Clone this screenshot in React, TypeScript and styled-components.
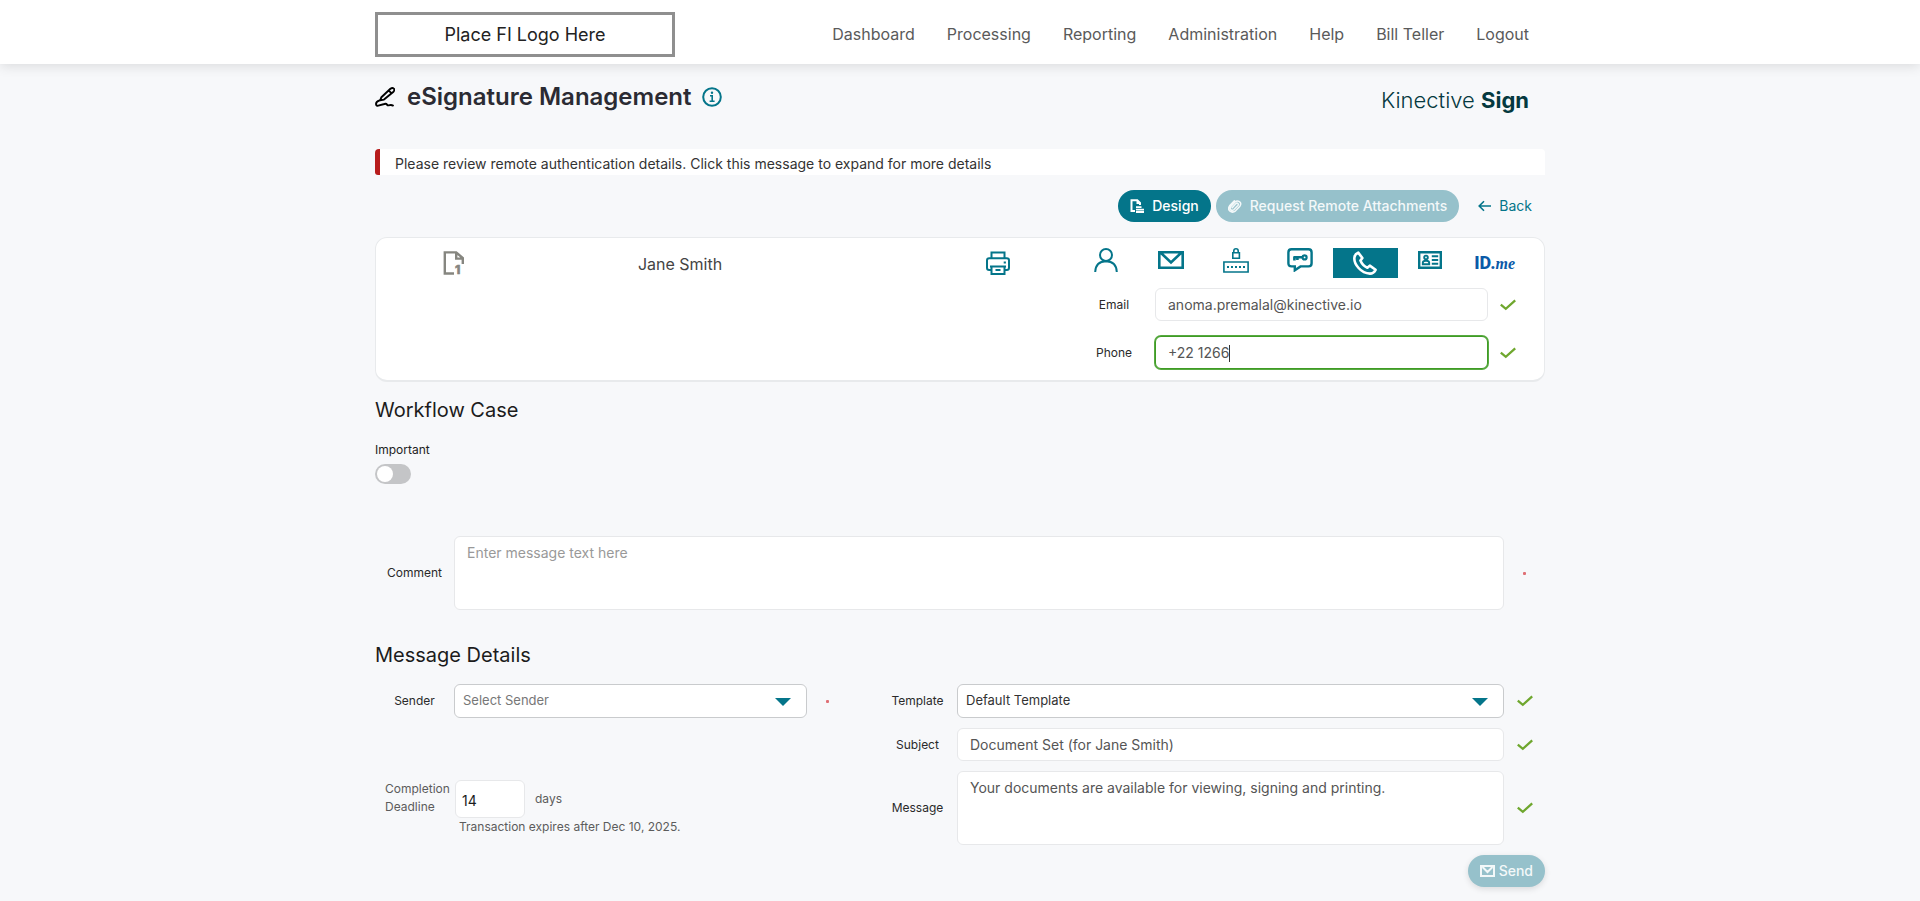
import React, { useState } from "react";
import styled, { createGlobalStyle, css } from "styled-components";

const teal = "#04758a";
const green = "#6fa72e";

const GlobalStyle = createGlobalStyle`
  *, *::before, *::after { box-sizing: border-box; }
  body {
    margin: 0;
    background: #f7f8fa;
    color: #222;
    font-family: Inter, "Liberation Sans", sans-serif;
    font-size: 14px;
  }
  button, input, select, textarea { font-family: inherit; }
  svg { display: block; flex: none; }
`;

const Container = styled.div`
  width: 100%;
  max-width: 1170px;
  margin: 0 auto;
`;

const Header = styled.header`
  background: #fff;
  box-shadow: 0 2px 12px rgba(0, 0, 0, 0.12);
`;

const HeaderInner = styled(Container)`
  display: flex;
  align-items: center;
  justify-content: space-between;
  height: 64px;
  padding: 4px 16px 0 0;
`;

const LogoBox = styled.div`
  display: flex;
  align-items: center;
  justify-content: center;
  width: 300px;
  height: 45px;
  border: 3px solid #8f8f8f;
  color: #222;
  font-size: 18px;
`;

const Nav = styled.nav`
  display: flex;
  gap: 32px;
`;

const NavLink = styled.a`
  color: #5a5a5a;
  font-size: 16px;
  line-height: 24px;
  text-decoration: none;
`;

const TitleRow = styled.div`
  display: flex;
  align-items: center;
  justify-content: space-between;
  padding: 16px 16px 0 0;
`;

const TitleGroup = styled.div`
  display: flex;
  align-items: center;
`;

const Title = styled.h1`
  margin: 0 10px 0 12px;
  color: #2b2b33;
  font-size: 24px;
  font-weight: 600;
  line-height: 32px;
`;

const IconButton = styled.button`
  display: flex;
  padding: 0;
  border: 0;
  background: none;
  color: ${teal};
  cursor: pointer;
`;

const ProductName = styled.div`
  color: #05393f;
  font-size: 22px;
  font-weight: 300;
  line-height: 28px;
  padding-top: 6px;
  b { font-weight: 700; }
`;

const Alert = styled.button`
  display: block;
  width: 100%;
  height: 26px;
  margin-top: 35px;
  padding: 3px 0 0 15px;
  border: 0;
  border-left: 5px solid #b71c1c;
  border-radius: 4px 4px 0 3px;
  background: #fff;
  color: #333;
  font-size: 14px;
  line-height: 20px;
  text-align: left;
`;

const Actions = styled.div`
  display: flex;
  justify-content: flex-end;
  align-items: center;
  gap: 5px;
  margin-top: 15px;
  padding-right: 13px;
`;

const PillButton = styled.button<{ $gap?: number; $raised?: boolean }>`
  display: flex;
  align-items: center;
  gap: ${(p) => p.$gap ?? 8}px;
  height: 32px;
  padding: 0 12px 1px;
  border: 0;
  border-radius: 16px;
  background: ${teal};
  color: #fff;
  font-size: 14px;
  font-weight: 500;
  &:disabled { background: #96c1cb; color: #f3f8f9; }
  ${(p) => p.$raised && css`box-shadow: 0 2px 6px rgba(0, 0, 0, 0.12);`}
`;

const BackLink = styled.a`
  display: flex;
  align-items: center;
  gap: 8px;
  margin-left: 14px;
  padding-bottom: 1px;
  color: ${teal};
  font-size: 14px;
  text-decoration: none;
`;

const Card = styled.section`
  display: grid;
  grid-template-columns: 155fr 298fr 244fr 471fr;
  margin-top: 15px;
  padding: 10px 0 11px;
  border: 1px solid #e8eaec;
  border-bottom-width: 2px;
  border-radius: 12px;
  background: #fff;
`;

const CardCell = styled.div<{ $end?: boolean }>`
  display: flex;
  align-items: center;
  justify-content: ${(p) => (p.$end ? "flex-end" : "center")};
  height: 30px;
  padding-right: ${(p) => (p.$end ? 62 : 0)}px;
`;

const SignerName = styled(CardCell)`
  padding-top: 2px;
  color: #444;
  font-size: 16px;
`;

const SignerForm = styled.div`
  padding-right: 16px;
`;

const Methods = styled.div`
  display: grid;
  grid-template-columns: repeat(7, 1fr);
  margin: 0 1px 10px;
`;

const MethodButton = styled.button<{ $active?: boolean }>`
  display: flex;
  align-items: center;
  justify-content: center;
  height: 30px;
  padding: ${(p) => (p.$active ? 0 : "0 0 6px")};
  border: 0;
  background: ${(p) => (p.$active ? teal : "none")};
  color: ${(p) => (p.$active ? "#fff" : teal)};
  cursor: pointer;
`;

const IdMe = styled.span`
  display: flex;
  align-items: baseline;
  padding-top: 6px;
  color: #0a5aa8;
  font-family: Roboto, "Liberation Sans", sans-serif;
  font-size: 18px;
  font-weight: 800;
  line-height: 20px;
  i {
    font-family: "Liberation Serif", serif;
    font-size: 16px;
  }
`;

const FieldRow = styled.div<{ $label?: number; $status?: number; $gap?: number }>`
  display: grid;
  grid-template-columns: ${(p) => p.$label ?? 79}px minmax(0, 1fr) ${(p) => p.$status ?? 41}px;
  align-items: center;
  margin-top: ${(p) => p.$gap ?? 0}px;
`;

const Label = styled.label`
  color: #2a2a2a;
  font-size: 12px;
  line-height: 16px;
  text-align: center;
`;

const boxed = css`
  display: block;
  width: 100%;
  border: 1px solid #e7e8ea;
  border-radius: 6px;
  background: #fff;
  color: #555;
  font-size: 14px;
  outline: 0;
`;

const TextInput = styled.input<{ $current?: boolean }>`
  ${boxed}
  height: 33px;
  padding: 0 12px;
  ${(p) =>
    p.$current &&
    css`
      border-color: #3f9b25;
      box-shadow: 0 0 0 1px #57aa40;
    `}
`;

const TextArea = styled.textarea`
  ${boxed}
  height: 74px;
  padding: 6px 12px;
  line-height: 20px;
  resize: none;
  &::placeholder { color: #999; }
`;

const CaretWrap = styled.div`
  position: relative;
`;

const Caret = styled.span`
  position: absolute;
  top: 9px;
  left: 74px;
  width: 1px;
  height: 17px;
  background: #333;
`;

const SelectWrap = styled.div`
  position: relative;
  svg {
    position: absolute;
    top: 14px;
    right: 16px;
    pointer-events: none;
  }
`;

const Select = styled.select<{ $empty?: boolean }>`
  ${boxed}
  appearance: none;
  height: 34px;
  padding: 0 40px 2px 8px;
  border-color: #c9cbcd;
  color: ${(p) => (p.$empty ? "#777" : "#333")};
  font-size: 13px;
`;

const Status = styled.span`
  display: flex;
  justify-content: center;
`;

const RequiredDot = styled.span`
  width: 3px;
  height: 3px;
  border-radius: 1px;
  background: #df6f74;
`;

const SectionTitle = styled.h2<{ $top: number }>`
  margin: ${(p) => p.$top}px 0 0;
  color: #1c1c1c;
  font-size: 20px;
  font-weight: 400;
  line-height: 28px;
`;

const ToggleLabel = styled.label`
  display: flex;
  flex-direction: column;
  gap: 6px;
  width: fit-content;
  margin: 18px 0 52px;
  font-size: 12px;
  line-height: 16px;
`;

const Toggle = styled.input`
  appearance: none;
  display: flex;
  align-items: center;
  width: 36px;
  height: 20px;
  margin: 0;
  padding: 0 2px;
  border-radius: 10px;
  background: #c4c5c7;
  &::before {
    content: "";
    width: 16px;
    height: 16px;
    border-radius: 50%;
    background: #fff;
  }
  &:checked { justify-content: flex-end; background: ${teal}; }
`;

const Details = styled.div`
  display: grid;
  grid-template-columns: 473fr 667fr;
  gap: 30px;
  margin-top: 15px;
`;

const RightFields = styled.div`
  display: flex;
  flex-direction: column;
  gap: 10px;
`;

const Deadline = styled.div`
  display: grid;
  grid-template-columns: 80px 70px 1fr;
  margin-top: 62px;
  color: #5c5c5c;
  font-size: 12px;
  line-height: 18px;
`;

const DeadlineLabel = styled.label`
  padding-left: 10px;
`;

const DaysInput = styled.input`
  ${boxed}
  height: 38px;
  padding: 2px 6px 0;
  color: #1c1c1c;
`;

const Days = styled.span`
  align-self: center;
  padding-left: 10px;
`;

const Expires = styled.span`
  grid-column: 2 / -1;
  padding-left: 4px;
`;

const Footer = styled.div`
  display: flex;
  justify-content: flex-end;
  padding: 10px 0 14px;
`;

const Svg = (p: { w: number; h: number; sw?: number; children: React.ReactNode }) => (
  <svg width={p.w} height={p.h} viewBox={`0 0 ${p.w} ${p.h}`} fill="none" stroke="currentColor" strokeWidth={p.sw ?? 2} aria-hidden="true">
    {p.children}
  </svg>
);

const PenIcon = () => (
  <svg width="20" height="20" viewBox="0 0 20 20" fill="none" stroke="#000" strokeWidth="1.9" strokeLinecap="round" strokeLinejoin="round" aria-hidden="true">
    <path d="M5.2 13.4 6.4 10.2 15.4 1.8Q17.4.4 18.8 1.6T18.2 5L9 12.6zM13.8 3.6 16.4 6.2" />
    <path d="M4.6 13.4Q1 14.6 1 17T4.2 18.4L9.4 17Q11.2 16.4 12 17.6T14.6 18.2 18 18.6" />
  </svg>
);

const InfoIcon = () => (
  <Svg w={20} h={20} sw={2}>
    <circle cx="10" cy="10" r="8.8" />
    <path d="M8 8.8h2.2v5.4M7.6 14.2h5" strokeWidth="1.6" />
    <circle cx="10" cy="5.8" r="1.2" fill="currentColor" stroke="none" />
  </Svg>
);

const DesignIcon = () => (
  <Svg w={14} h={14}>
    <path d="M5 12H1.5V1.3h5.8L10 4v2" />
    <path d="M6.5 1v4h4.2z" fill="currentColor" stroke="none" />
    <path d="M6 8.2h5.5M6 10.6h8M6 13h8" strokeWidth="1.8" />
  </Svg>
);

const ClipIcon = () => (
  <Svg w={14} h={14} sw={1.5}>
    <path
      d="M4.2 8.7 8 4.6q1-1 1.9-.1t0 1.9L6 10.5q-1.6 1.6-3.1.2t0-3.2L7 3.1Q9 1 11.4 2.6t.5 4.6L7.6 11.8Q4.6 14.2 2 12.2T1.6 6.8L6.4 1.8"
      strokeLinecap="round"
    />
  </Svg>
);

const ArrowLeftIcon = () => (
  <Svg w={13} h={12} sw={1.6}>
    <path d="M13 6H1.2M6 1.2 1.2 6 6 10.8" />
  </Svg>
);

const DocIcon = () => (
  <svg width="22" height="26" viewBox="0 0 22 26" fill="none" stroke="#868680" strokeWidth="2.4" role="img" aria-label="One document">
    <path d="M11 23.5H1.8V2.4h11.4L19.8 8v6M13.2 2.4v6.2h6.6" />
    <text x="12" y="24" fill="#868680" stroke="#868680" strokeWidth=".6" fontSize="12" fontWeight="800">1</text>
  </svg>
);

const PrinterIcon = () => (
  <Svg w={26} h={25}>
    <path d="M6.5 7V1.5h13V7M6.5 19H4.2Q2 19 2 16.8V9.4Q2 7.2 4.2 7.2h17.6Q24 7.2 24 9.4v7.4q0 2.2-2.2 2.2h-2.3" />
    <path d="M6.5 15.5h13V23h-13zM5 15.5h16M10.5 19h5" />
    <path d="M18.7 11.5h2.2" />
  </Svg>
);

const UserIcon = () => (
  <Svg w={24} h={24}>
    <circle cx="12" cy="7" r="6" />
    <path d="M1.2 24Q1.6 13.4 12 13.2 22.4 13.4 22.8 24" />
  </Svg>
);

const MailIcon = () => (
  <Svg w={26} h={18} sw={2.6}>
    <path d="M1.3 1.3h23.4v15.4H1.3zM3 2l10 9.5L23 2" />
  </Svg>
);

const PasscodeIcon = () => (
  <Svg w={26} h={25} sw={1.6}>
    <path d="M9.8 4.8h6.6v5.4H9.8zM10.8 4.8V3q0-2.2 2.2-2.2T15.2 3v1.8" />
    <path d="M.9 14h24.2v10H.9z" />
    <path d="M4 19h2M8 19h2M12 19h2M16 19h2M20 19h2" strokeWidth="1.8" />
  </Svg>
);

const ChatKeyIcon = () => (
  <Svg w={26} h={24} sw={2.4}>
    <path d="M4.5 1.2h17Q24.6 1.2 24.6 4.4v10.8q0 3.2-3.1 3.2H13.5L7.8 22.3v-3.9H4.5q-3.1 0-3.1-3.2V4.4q0-3.2 3.1-3.2z" />
    <path d="M6.4 9.2h9.2M7.4 9v3.4M10.4 9v3" strokeWidth="2.6" />
    <circle cx="17.6" cy="9.4" r="2" strokeWidth="2.2" />
  </Svg>
);

const PhoneIcon = () => (
  <Svg w={24} h={24} sw={2.6}>
    <path
      d="M5.2 1.6 9.4 7 7.4 9.6Q9.6 14.8 14.4 16.8L16.8 14.6 22.6 18.8Q20.6 22.6 17 22.6 10.4 22.4 5.6 17T1.4 6.6Q1.8 3 5.2 1.6z"
      strokeLinejoin="round"
    />
  </Svg>
);

const IdCardIcon = () => (
  <Svg w={24} h={18} sw={2.4}>
    <path d="M1.2 1.2h21.6v15.6H1.2z" />
    <circle cx="8" cy="6.4" r="1.8" strokeWidth="1.9" />
    <path d="M4.8 13.2v-1.4q0-2 3.2-2t3.2 2v1.4z" strokeWidth="1.9" />
    <path d="M13.8 5.3h6.4M13.8 9h6.4M13.8 12.7h6.4" strokeWidth="2" />
  </Svg>
);

const Check = () => (
  <Status role="img" aria-label="Valid">
    <svg width="16" height="12" viewBox="0 0 16 12" fill="none" stroke={green} strokeWidth="2.3" aria-hidden="true">
      <path d="M.8 5.6 5.8 9.8 15.2 1.4" />
    </svg>
  </Status>
);

const Required = () => (
  <Status role="img" aria-label="Required">
    <RequiredDot />
  </Status>
);

const DropArrow = () => (
  <svg width="16" height="8" viewBox="0 0 16 8" fill={teal} aria-hidden="true">
    <path d="M0 0h16L8 8z" />
  </svg>
);

const SendIcon = () => (
  <Svg w={15} h={12}>
    <path d="M1 1h13v10H1zM2.5 2 7.5 7l5-5" />
  </Svg>
);

const navItems = ["Dashboard", "Processing", "Reporting", "Administration", "Help", "Bill Teller", "Logout"];

const methods = [
  { name: "In person", icon: <UserIcon /> },
  { name: "Email", icon: <MailIcon /> },
  { name: "Passcode", icon: <PasscodeIcon /> },
  { name: "Text message code", icon: <ChatKeyIcon /> },
  { name: "Phone call", icon: <PhoneIcon /> },
  { name: "Identity card", icon: <IdCardIcon /> },
  { name: "ID.me", icon: <IdMe>ID.<i>me</i></IdMe> },
];

export default function App() {
  const [method, setMethod] = useState("Phone call");

  return (
    <>
      <GlobalStyle />
      <Header>
        <HeaderInner>
          <LogoBox>Place FI Logo Here</LogoBox>
          <Nav>
            {navItems.map((item) => (
              <NavLink key={item} href="#">{item}</NavLink>
            ))}
          </Nav>
        </HeaderInner>
      </Header>

      <Container as="main">
        <TitleRow>
          <TitleGroup>
            <PenIcon />
            <Title>eSignature Management</Title>
            <IconButton type="button" aria-label="Information"><InfoIcon /></IconButton>
          </TitleGroup>
          <ProductName>Kinective <b>Sign</b></ProductName>
        </TitleRow>

        <Alert type="button">
          Please review remote authentication details. Click this message to expand for more details
        </Alert>

        <Actions>
          <PillButton type="button"><DesignIcon />Design</PillButton>
          <PillButton type="button" disabled><ClipIcon />Request Remote Attachments</PillButton>
          <BackLink href="#"><ArrowLeftIcon />Back</BackLink>
        </Actions>

        <Card>
          <CardCell><DocIcon /></CardCell>
          <SignerName>Jane Smith</SignerName>
          <CardCell $end>
            <IconButton type="button" aria-label="Print"><PrinterIcon /></IconButton>
          </CardCell>
          <SignerForm>
            <Methods>
              {methods.map((m) => (
                <MethodButton
                  key={m.name}
                  type="button"
                  aria-label={m.name}
                  aria-pressed={m.name === method}
                  $active={m.name === method}
                  onClick={() => setMethod(m.name)}
                >
                  {m.icon}
                </MethodButton>
              ))}
            </Methods>
            <FieldRow $label={82} $status={40}>
              <Label htmlFor="email">Email</Label>
              <TextInput id="email" type="email" defaultValue="anoma.premalal@kinective.io" />
              <Check />
            </FieldRow>
            <FieldRow $label={82} $status={40} $gap={15}>
              <Label htmlFor="phone">Phone</Label>
              <CaretWrap>
                <TextInput id="phone" type="tel" defaultValue="+22 1266" $current />
                <Caret />
              </CaretWrap>
              <Check />
            </FieldRow>
          </SignerForm>
        </Card>

        <SectionTitle $top={14}>Workflow Case</SectionTitle>
        <ToggleLabel>
          Important
          <Toggle type="checkbox" role="switch" />
        </ToggleLabel>
        <FieldRow>
          <Label htmlFor="comment">Comment</Label>
          <TextArea id="comment" placeholder="Enter message text here" />
          <Required />
        </FieldRow>

        <SectionTitle $top={31}>Message Details</SectionTitle>
        <Details>
          <div>
            <FieldRow>
              <Label htmlFor="sender">Sender</Label>
              <SelectWrap>
                <Select id="sender" $empty>
                  <option>Select Sender</option>
                </Select>
                <DropArrow />
              </SelectWrap>
              <Required />
            </FieldRow>
            <Deadline>
              <DeadlineLabel htmlFor="deadline">Completion Deadline</DeadlineLabel>
              <DaysInput id="deadline" type="text" inputMode="numeric" defaultValue="14" />
              <Days>days</Days>
              <Expires>Transaction expires after Dec 10, 2025.</Expires>
            </Deadline>
          </div>
          <RightFields>
            <FieldRow>
              <Label htmlFor="template">Template</Label>
              <SelectWrap>
                <Select id="template">
                  <option>Default Template</option>
                </Select>
                <DropArrow />
              </SelectWrap>
              <Check />
            </FieldRow>
            <FieldRow>
              <Label htmlFor="subject">Subject</Label>
              <TextInput id="subject" type="text" defaultValue="Document Set (for Jane Smith)" />
              <Check />
            </FieldRow>
            <FieldRow>
              <Label htmlFor="message">Message</Label>
              <TextArea id="message" defaultValue="Your documents are available for viewing, signing and printing." />
              <Check />
            </FieldRow>
          </RightFields>
        </Details>

        <Footer>
          <PillButton type="button" disabled $gap={4} $raised><SendIcon />Send</PillButton>
        </Footer>
      </Container>
    </>
  );
}
